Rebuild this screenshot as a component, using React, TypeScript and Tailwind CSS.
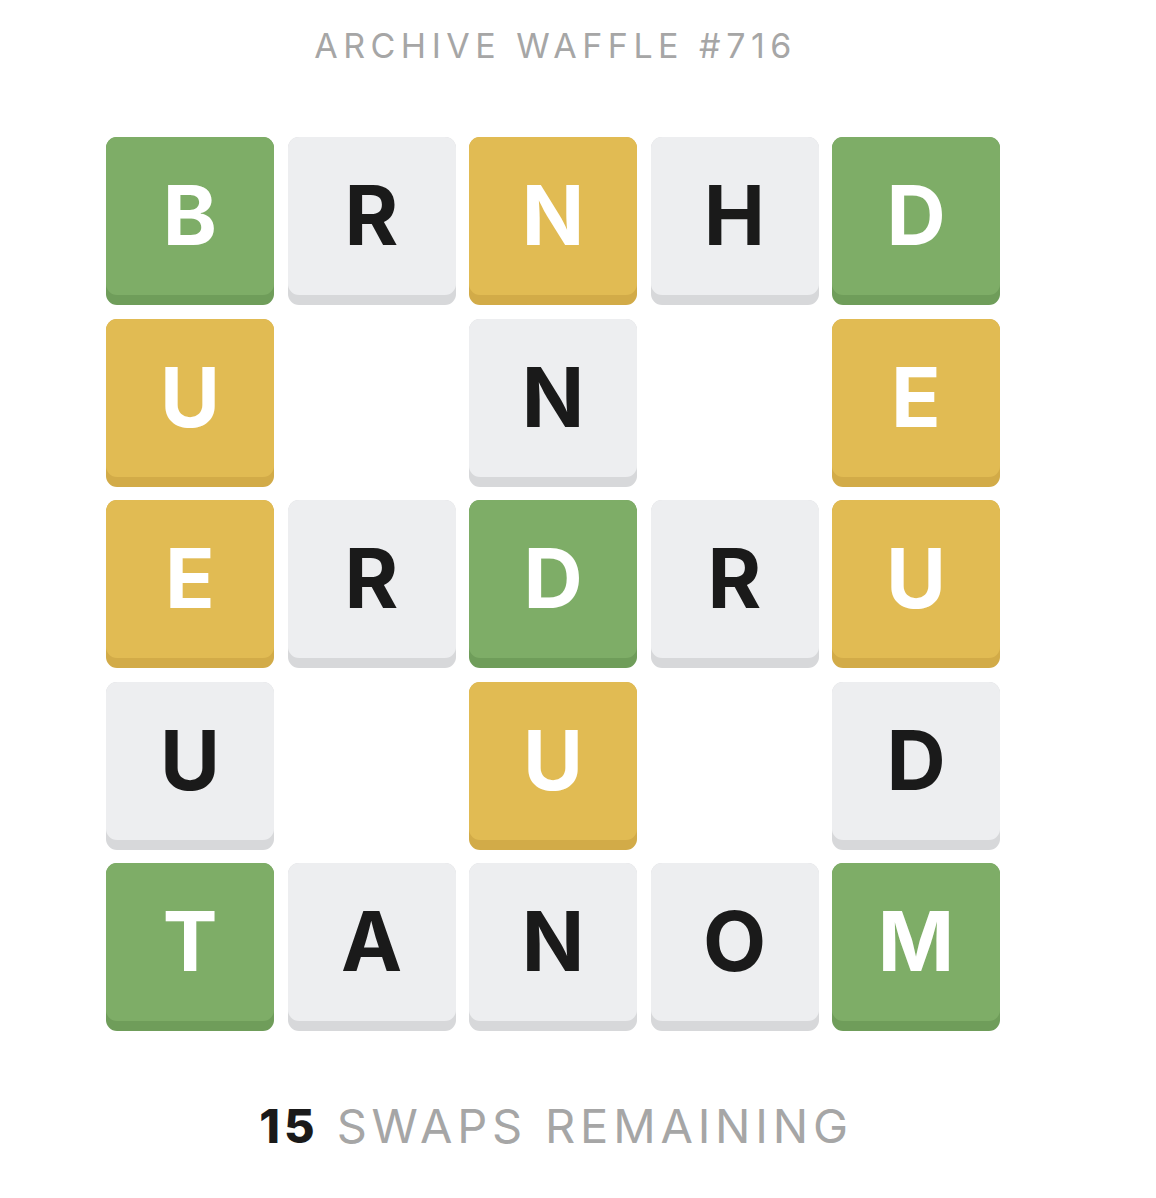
import React from "react";

type C = "g" | "y" | "w" | null;
const grid: [string, C][][] = [
  [["B", "g"], ["R", "w"], ["N", "y"], ["H", "w"], ["D", "g"]],
  [["U", "y"], ["", null], ["N", "w"], ["", null], ["E", "y"]],
  [["E", "y"], ["R", "w"], ["D", "g"], ["R", "w"], ["U", "y"]],
  [["U", "w"], ["", null], ["U", "y"], ["", null], ["D", "w"]],
  [["T", "g"], ["A", "w"], ["N", "w"], ["O", "w"], ["M", "g"]],
];

function Tile({ l, c }: { l: string; c: C }) {
  if (!c) return <div className="h-[168px] w-[168px]" />;
  const base =
    c === "g" ? "bg-[#6f9d5a]" : c === "y" ? "bg-[#d2ab48]" : "bg-[#d7d8da]";
  const face =
    c === "g"
      ? "bg-[#7ead67] text-white"
      : c === "y"
      ? "bg-[#e1bb53] text-white"
      : "bg-[#edeef0] text-[#1a1a1a]";
  return (
    <div className={`h-[168px] w-[168px] rounded-[11px] ${base}`}>
      <div
        className={`flex h-[158px] w-[168px] items-center justify-center rounded-[11px] text-[82px] font-bold leading-none ${face}`}
      >
        {l}
      </div>
    </div>
  );
}

export default function App() {
  return (
    <div
      className="flex w-[1106px] flex-col items-center bg-white"
      style={{ fontFamily: "Inter, 'Noto Sans', sans-serif" }}
    >
      <div className="mt-[24px] pl-[5px] text-[34px] font-normal leading-[44px] tracking-[5.5px] text-[#a6a6a6]">
        ARCHIVE WAFFLE #716
      </div>
      <div className="mt-[69px] grid grid-cols-[repeat(5,168px)] gap-[13.5px]">
        {grid.flat().map(([l, c], i) => (
          <Tile key={i} l={l} c={c} />
        ))}
      </div>
      <div className="mt-[65px] flex items-baseline pl-[6px] text-[47px] leading-[60px] text-[#a6a6a6]">
        <span className="mr-[18px] font-extrabold tracking-[4px] text-[#1a1a1a]">15</span>
        <span className="tracking-[4.8px]">SWAPS REMAINING</span>
      </div>
    </div>
  );
}
